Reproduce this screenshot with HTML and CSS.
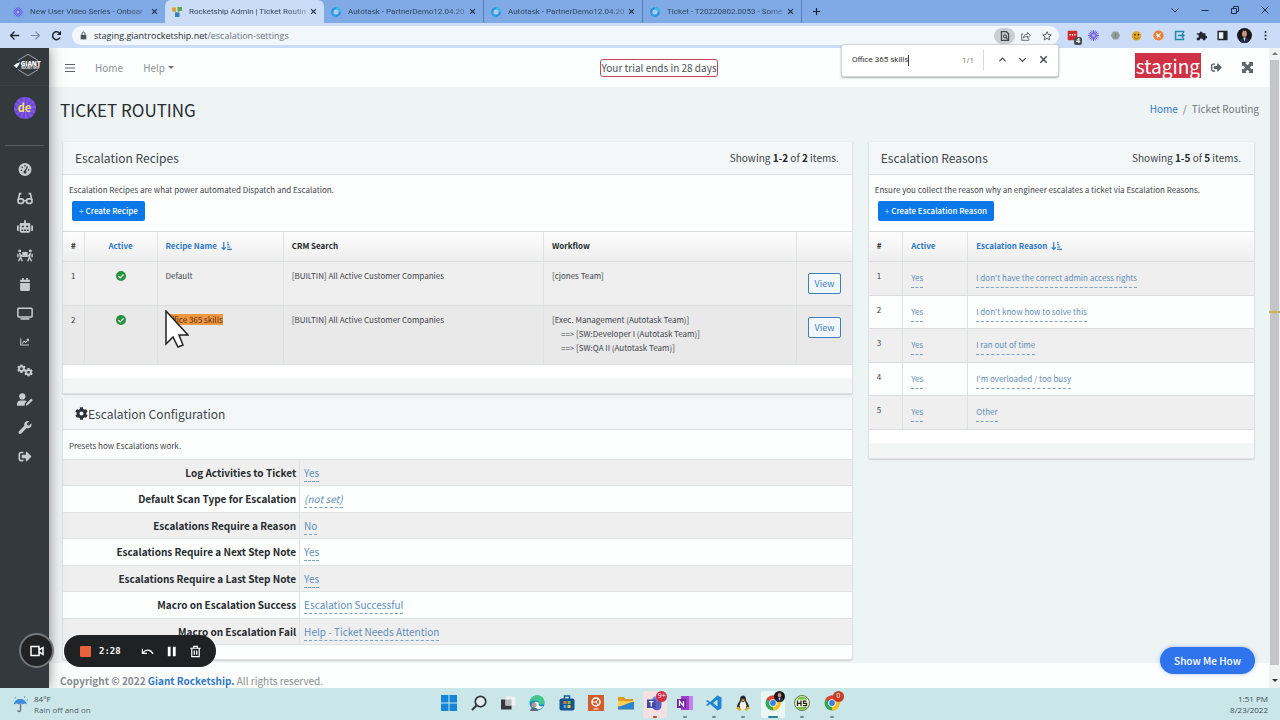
FILE: index.html
```html
<!DOCTYPE html>
<html lang="en">
<head>
<meta charset="utf-8">
<title>Rocketship Admin | Ticket Routing</title>
<link rel="stylesheet" href="styles.css">
</head>
<body>
<svg class="defs" aria-hidden="true">
  <symbol id="signout" viewBox="0 0 512 512"><path d="M497 273L329 441c-15 15-41 4.500-41-17v-96H152c-13.300 0-24-10.700-24-24v-96c0-13.300 10.700-24 24-24h136V88c0-21.400 25.900-32 41-17l168 168c9.300 9.400 9.300 24.600 0 34zM192 436v-40c0-6.600-5.400-12-12-12H96c-17.700 0-32-14.300-32-32V160c0-17.700 14.300-32 32-32h84c6.600 0 12-5.400 12-12V76c0-6.600-5.400-12-12-12H96c-53 0-96 43-96 96v192c0 53 43 96 96 96h84c6.600 0 12-5.400 12-12z"/></symbol>
  <symbol id="cog" viewBox="0 0 512 512"><path d="M487.4 315.7l-42.6-24.6c4.3-23.2 4.3-47 0-70.2l42.6-24.6c4.900-2.800 7.100-8.600 5.500-14-11.100-35.600-30-67.800-54.700-94.600-3.800-4.100-10-5.100-14.800-2.300L380.8 110c-17.900-15.400-38.500-27.300-60.800-35.100V25.8c0-5.600-3.900-10.500-9.400-11.700-36.700-8.200-74.300-7.800-109.200 0-5.500 1.200-9.400 6.100-9.400 11.700V75c-22.200 7.900-42.800 19.800-60.800 35.100L88.700 85.500c-4.900-2.800-11-1.900-14.800 2.300-24.700 26.700-43.600 58.900-54.700 94.600-1.700 5.400.6 11.200 5.500 14L67.300 221c-4.300 23.200-4.300 47 0 70.200l-42.600 24.600c-4.900 2.800-7.100 8.600-5.500 14 11.100 35.600 30 67.800 54.700 94.600 3.800 4.100 10 5.100 14.800 2.300l42.600-24.600c17.900 15.400 38.500 27.300 60.800 35.100v49.200c0 5.600 3.900 10.500 9.400 11.700 36.700 8.200 74.300 7.800 109.200 0 5.500-1.200 9.400-6.100 9.400-11.700v-49.200c22.200-7.900 42.800-19.800 60.800-35.100l42.600 24.600c4.900 2.800 11 1.900 14.800-2.300 24.700-26.700 43.600-58.900 54.700-94.600 1.500-5.500-.7-11.300-5.600-14.100zM256 336c-44.100 0-80-35.900-80-80s35.900-80 80-80 80 35.900 80 80-35.900 80-80 80z"/></symbol>
  <symbol id="check" viewBox="0 0 16 16"><circle cx="8" cy="8" r="8" fill="#28913f"/><path d="M4 8.200l2.800 2.800L12 5.600" fill="none" stroke="#fff" stroke-width="2"/></symbol>
  <symbol id="sort" viewBox="0 0 16 14"><path d="M4 1v11M1 9l3 3 3-3M9 2h2M9 5h3M9 8.500h4.500M9 12h7" fill="none" stroke="currentColor" stroke-width="1.700"/></symbol>
  <symbol id="x" viewBox="0 0 10 10"><path d="M1.500 1.500l7 7M8.500 1.500l-7 7" fill="none" stroke="currentColor" stroke-width="1.600"/></symbol>
  <symbol id="burst" viewBox="0 0 20 20"><g stroke="#6a5be2" stroke-width="1.800"><path d="M10 0v20M0 10h20M3 3l14 14M17 3L3 17M6.200 1l7.600 18M13.800 1L6.200 19M1 6.200l18 7.600M1 13.800l18-7.600"/></g><circle cx="10" cy="10" r="3" fill="#a9b4f4"/></symbol>
  <symbol id="ring" viewBox="0 0 20 20"><circle cx="10" cy="10" r="7.500" fill="none" stroke="#2b8fdc" stroke-width="4.500"/><path d="M10 2.500a7.500 7.500 0 0 1 7.500 7.500" fill="none" stroke="#35c0ec" stroke-width="4.500"/><path d="M2.500 10a7.500 7.500 0 0 0 7.500 7.500" fill="none" stroke="#2ba4e4" stroke-width="4.500"/><circle cx="10" cy="10" r="5" fill="#a9cdf2"/></symbol>
  <symbol id="chrome" viewBox="0 0 32 32"><circle cx="16" cy="16" r="15" fill="#34a853"/><path d="M16 16L29 8.500A15 15 0 0 1 16 31z" fill="#fbc116"/><path d="M16 16L3 8.500A15 15 0 0 1 29 8.500z" fill="#e24335"/><circle cx="16" cy="16" r="7.500" fill="#fff"/><circle cx="16" cy="16" r="5.800" fill="#3c7de8"/></symbol>
  <symbol id="face" viewBox="0 0 20 20"><circle cx="10" cy="10" r="10" fill="#17181d"/><ellipse cx="10" cy="7.500" rx="3.300" ry="4.300" fill="#c9927c"/><path d="M6.500 6c0-5 7-5 7 0l-1.500-2H8z" fill="#443029"/><path d="M4 18c0-5 3-5.500 6-5.500s6 .5 6 5.500a10 10 0 0 1-12 0z" fill="#232f4b"/><path d="M8.500 12.500h3L10 18z" fill="#d9dfe7"/></symbol>
</svg>

<header class="browser">
  <div class="tabstrip">
    <div class="tab"><svg class="fav"><use href="#burst"/></svg><span class="tab-title">New User Video Series - Onboar</span><button class="tab-x" aria-label="Close tab"><svg><use href="#x"/></svg></button></div>
    <div class="tab active"><svg class="fav" viewBox="0 0 20 20"><path d="M0 1h8v8H0z" fill="#e79a35"/><path d="M11 0h9v8h-9z" fill="#67a63b"/><path d="M6 11h9v9H6z" fill="#377ec2"/><path d="M5 8l5 4 5-4" fill="none" stroke="#7b9c61" stroke-width="2"/></svg><span class="tab-title">Rocketship Admin | Ticket Routin</span><button class="tab-x" aria-label="Close tab"><svg><use href="#x"/></svg></button></div>
    <div class="tab"><svg class="fav"><use href="#ring"/></svg><span class="tab-title">Autotask - PartnerDemo12.04.20</span><button class="tab-x" aria-label="Close tab"><svg><use href="#x"/></svg></button></div>
    <div class="tab line"><svg class="fav"><use href="#ring"/></svg><span class="tab-title">Autotask - PartnerDemo12.04.20</span><button class="tab-x" aria-label="Close tab"><svg><use href="#x"/></svg></button></div>
    <div class="tab line end"><svg class="fav"><use href="#ring"/></svg><span class="tab-title">Ticket - T20220802.0053 - Some</span><button class="tab-x" aria-label="Close tab"><svg><use href="#x"/></svg></button></div>
    <button class="newtab" aria-label="New tab"><svg viewBox="0 0 10 10"><path d="M5 1v8M1 5h8" stroke="currentColor" stroke-width="1.300"/></svg></button>
    <div class="winctl">
      <button aria-label="Search tabs"><svg viewBox="0 0 10 10"><path d="M1.500 3.500L5 7l3.500-3.500" fill="none" stroke="currentColor"/></svg></button>
      <button aria-label="Minimize"><svg viewBox="0 0 10 10"><path d="M1.500 5.500h7" stroke="currentColor"/></svg></button>
      <button aria-label="Restore"><svg viewBox="0 0 10 10"><path d="M1.500 3.500h5v5h-5zM3.500 3.500v-2h5v5h-2" fill="none" stroke="currentColor"/></svg></button>
      <button aria-label="Close"><svg viewBox="0 0 10 10"><path d="M1.500 1.500l7 7M8.500 1.500l-7 7" stroke="currentColor"/></svg></button>
    </div>
  </div>
  <div class="toolbar">
    <button aria-label="Back"><svg viewBox="0 0 14 14"><path d="M13 7H2M7 2L2 7l5 5" fill="none" stroke="currentColor" stroke-width="1.700"/></svg></button>
    <button class="dim" aria-label="Forward"><svg viewBox="0 0 14 14"><path d="M1 7h11M7 2l5 5-5 5" fill="none" stroke="currentColor" stroke-width="1.500"/></svg></button>
    <button aria-label="Reload"><svg viewBox="0 0 14 14"><path d="M11.500 9.500A5 5 0 1 1 11 4.200" fill="none" stroke="currentColor" stroke-width="1.900"/><path d="M12.800 1v5.500H7.500z" fill="currentColor"/></svg></button>
    <div class="omnibox">
      <svg class="lock" viewBox="0 0 10 12"><path d="M1 5h8v6.500H1z" fill="#4c5357"/><path d="M3 5V3a2 2 0 0 1 4 0v2" fill="none" stroke="#4c5357" stroke-width="1.400"/></svg>
      <p class="url"><span>staging.giantrocketship.net</span>/escalation-settings</p>
      <button class="pill" aria-label="Find"><svg viewBox="0 0 12 14"><path d="M1 1h7l3 3v9H1z" fill="none" stroke="currentColor" stroke-width="1.700"/><circle cx="6" cy="7.500" r="2.200" fill="none" stroke="currentColor" stroke-width="1.500"/><path d="M7.500 9l3 3.500" stroke="currentColor" stroke-width="1.500"/></svg></button>
      <button aria-label="Share"><svg viewBox="0 0 14 14"><path d="M3 4H1v9h10v-3M3.500 10c0-4 2.500-5.500 5.500-5.500V2l4 4-4 4V7.500c-2.500 0-4 .5-5.500 2.500z" fill="none" stroke="currentColor" stroke-width="1.100"/></svg></button>
      <button aria-label="Bookmark"><svg viewBox="0 0 14 14"><path d="M7 1l1.800 4 4.200.4-3.200 2.800 1 4.300L7 10.200l-3.800 2.300 1-4.300L1 5.400 5.200 5z" fill="none" stroke="currentColor" stroke-width="1.200"/></svg></button>
    </div>
    <div class="exts">
      <button class="ext lp" aria-label="Passwords"><svg viewBox="0 0 16 16"><rect width="14" height="14" x="1" y="1" rx="1.500" fill="#cc2a2c"/><circle cx="4.500" cy="7" r="1.200" fill="#fff"/><circle cx="8" cy="7" r="1.200" fill="#fff"/><circle cx="11.500" cy="7" r="1.200" fill="#fff"/></svg><span>4</span></button>
      <button class="ext" aria-label="Loom"><svg><use href="#burst"/></svg></button>
      <button class="ext" aria-label="Extension"><svg viewBox="0 0 14 14"><path d="M4 2h6l3 5-3 5H4L1 7z" fill="#95a19c"/><path d="M4 6h6M4 9h6M7 3v8" stroke="#7c8784"/></svg></button>
      <button class="ext" aria-label="Cookies"><svg viewBox="0 0 14 14"><circle cx="7" cy="7.500" r="6" fill="#e2a62b"/><circle cx="5" cy="6" r="1.100" fill="#47351c"/><circle cx="9.500" cy="6" r="1.100" fill="#47351c"/><path d="M4 9.500c2 2 4 2 6 0" stroke="#8a4b15" fill="none"/></svg></button>
      <button class="ext" aria-label="Extension"><svg viewBox="0 0 14 14"><circle cx="7" cy="7" r="6.500" fill="#ee7a2f"/><path d="M4 4l6 6M10 4L7 7l-2 3M4 7h2" fill="none" stroke="#fff" stroke-width="1.300"/></svg></button>
      <button class="ext" aria-label="Extension"><svg viewBox="0 0 14 14"><path d="M12 4V2H2v10h10v-2M5 7h8M10 4.500L12.500 7 10 9.500" fill="none" stroke="#2b87ae" stroke-width="2"/></svg></button>
      <button class="ext" aria-label="Extensions"><svg viewBox="0 0 14 14"><path d="M1 4h3.500a2 2 0 1 1 4 0H12v3.300a1.800 1.800 0 1 1 0 3.500V13H8.600a1.900 1.900 0 1 0-3.700 0H1V9.600A1.900 1.900 0 1 0 1 6z" fill="#23282c"/></svg></button>
      <button class="ext" aria-label="Side panel"><svg viewBox="0 0 14 14"><path d="M1.500 2h11v10h-11z" fill="#eef3fb" stroke="#1f2529" stroke-width="1.800"/><path d="M8 2h4.500v10H8z" fill="#1f2529"/></svg></button>
      <button class="ext avatar" aria-label="Profile"><svg><use href="#face"/></svg></button>
      <button class="ext" aria-label="Menu"><svg viewBox="0 0 14 14"><circle cx="7" cy="2.500" r="1.300"/><circle cx="7" cy="7" r="1.300"/><circle cx="7" cy="11.500" r="1.300"/></svg></button>
    </div>
  </div>
  <form class="find">
    <input aria-label="Find in page" value="Office 365 skills"><i class="caret"></i>
    <span class="count">1/1</span>
    <button type="button" aria-label="Previous"><svg viewBox="0 0 10 10"><path d="M1.500 7L5 3.500 8.500 7" fill="none" stroke="currentColor" stroke-width="1.300"/></svg></button>
    <button type="button" aria-label="Next"><svg viewBox="0 0 10 10"><path d="M1.500 3.500L5 7l3.500-3.500" fill="none" stroke="currentColor" stroke-width="1.300"/></svg></button>
    <button type="button" aria-label="Close find bar"><svg><use href="#x"/></svg></button>
  </form>
</header>

<div class="viewport">
  <aside class="sidebar">
    <a class="brand" href="#" aria-label="Giant Rocketship"><svg viewBox="0 0 84 66"><path d="M14 20L42 3l28 17M14 46l28 17 28-17" fill="none" stroke="#c9cfd1" stroke-width="2"/><path d="M1 36l9-7 10-4-4 9-7 8-2-4z" fill="#fff"/><text x="22" y="35" class="logo-a">GIANT</text><text x="23" y="45" class="logo-b">ROCKET SHIP</text></svg></a>
    <a class="user" href="#">de</a>
    <nav class="side-nav" aria-label="Main">
      <a href="#" aria-label="Dashboard"><svg viewBox="0 0 16 16"><circle cx="8" cy="8" r="8"/><path d="M7.500 11L11 4.500" stroke="#33393d" stroke-width="1.500"/><g fill="#33393d"><circle cx="8" cy="11" r="1.900"/><circle cx="3.500" cy="9" r="1"/><circle cx="4.500" cy="5.200" r="1"/><circle cx="8" cy="3.500" r="1"/><circle cx="12.500" cy="8.500" r="1"/></g></svg></a>
      <a href="#" aria-label="Review"><svg viewBox="0 0 18 14"><path d="M5 1.500H3L1.200 9M13 1.500h2L16.800 9M7.500 9.500h3" fill="none" stroke="currentColor" stroke-width="1.800"/><rect x="1.200" y="7.500" width="6" height="5" rx="2" fill="none" stroke="currentColor" stroke-width="1.900"/><rect x="10.800" y="7.500" width="6" height="5" rx="2" fill="none" stroke="currentColor" stroke-width="1.900"/></svg></a>
      <a href="#" aria-label="Automation"><svg viewBox="0 0 18 14"><path d="M8 0h2v3h3.500a1.500 1.500 0 0 1 1.500 1.500V12a2 2 0 0 1-2 2H5a2 2 0 0 1-2-2V4.500A1.500 1.500 0 0 1 4.500 3H8zM0 6h2v6H1a1 1 0 0 1-1-1zM16 6h2v5a1 1 0 0 1-1 1h-1z"/><g fill="#33393d"><circle cx="6.500" cy="7" r="1.200"/><circle cx="11.500" cy="7" r="1.200"/><path d="M5 10.500h2V12H5zM8 10.500h2V12H8zM11 10.500h2V12h-2z"/></g></svg></a>
      <a href="#" aria-label="Teams"><svg viewBox="0 0 18 14"><circle cx="3" cy="1.800" r="1.600"/><circle cx="15" cy="1.800" r="1.600"/><path d="M6 3h6v4.500H6z"/><path d="M3 4l1 5-2.500 4.500M4 9l2 4.500M15 4l-1 5 2.500 4.500M14 9l-2 4.500M3 5l3 3h6l3-3M1 5v4M17 5v4" fill="none" stroke="currentColor" stroke-width="1.600"/></svg></a>
      <a href="#" aria-label="Calendar"><svg viewBox="0 0 14 16"><path d="M1 2h2.500V0h2v2h3V0h2v2H13v3H1zM1 6h12v8.500a1.500 1.500 0 0 1-1.500 1.500h-9A1.500 1.500 0 0 1 1 14.500z"/></svg></a>
      <a href="#" aria-label="Screens"><svg viewBox="0 0 18 14"><rect x="1" y="1" width="16" height="10" rx="1" fill="none" stroke="currentColor" stroke-width="1.700"/><path d="M4 12.200h10V14H4z"/></svg></a>
      <a href="#" aria-label="Reports"><svg class="small" viewBox="0 0 12 10"><path d="M1 0v9h11M3 7l2.500-3 2 1.500L11 2M9 1.500h2.200V4" fill="none" stroke="currentColor" stroke-width="1.400"/></svg></a>
      <a href="#" aria-label="Settings"><svg viewBox="0 0 18 14"><use href="#cog" x="0" y="0" width="10" height="10"/><use href="#cog" x="8" y="4" width="10" height="10"/></svg></a>
      <a href="#" aria-label="Users"><svg viewBox="0 0 18 14"><circle cx="6" cy="3.500" r="3.500"/><path d="M0 14v-2c0-3 2-4 4-4h4c1.500 0 2.300.4 3 1l-2 2-.5 3zM10 14l.5-2.500L16 6l1.800 1.800-5.500 5.500z"/></svg></a>
      <a href="#" aria-label="Tools"><svg viewBox="0 0 512 512"><path d="M507.730 109.100c-2.240-9.030-13.540-12.090-20.120-5.510l-74.360 74.360-67.880-11.310-11.310-67.880 74.360-74.360c6.620-6.620 3.430-17.900-5.660-20.160-47.380-11.740-99.550.91-136.580 37.930-39.640 39.640-50.550 97.100-34.050 147.200L18.740 402.760c-24.990 24.990-24.990 65.510 0 90.500 24.990 24.990 65.510 24.990 90.500 0l213.210-213.210c50.120 16.710 107.470 5.680 147.370-34.220 37.070-37.070 49.700-89.320 37.910-136.730z"/></svg></a>
      <a href="#" aria-label="Sign out"><svg><use href="#signout"/></svg></a>
    </nav>
  </aside>

  <div class="page">
    <div class="navbar">
      <div class="nav-left">
        <button aria-label="Toggle menu"><svg viewBox="0 0 10 10"><path d="M0 1.500h10M0 5h10M0 8.500h10" stroke="currentColor" stroke-width="1.100"/></svg></button>
        <a href="#">Home</a>
        <a class="help" href="#">Help</a>
      </div>
      <a class="trial" href="#">Your trial ends in 28 days</a>
      <div class="nav-right">
        <span class="staging">staging</span>
        <button aria-label="Sign out"><svg><use href="#signout"/></svg></button>
        <button aria-label="Full screen"><svg viewBox="0 0 12 12"><path d="M0 0h5L3.700 1.300 6 3.600l2.300-2.300L7 0h5v5l-1.300-1.300L8.400 6l2.300 2.300L12 7v5H7l1.300-1.300L6 8.400l-2.300 2.300L5 12H0V7l1.300 1.300L3.600 6 1.300 3.700 0 5z"/></svg></button>
      </div>
    </div>

    <main class="content">
      <div class="title-row">
        <h1>TICKET ROUTING</h1>
        <nav class="crumbs" aria-label="Breadcrumb"><a href="#">Home</a><span>/</span><span>Ticket Routing</span></nav>
      </div>
      <div class="columns">
        <div class="stack">
          <section class="card">
            <header class="card-head"><h2>Escalation Recipes</h2><p>Showing <b>1-2</b> of <b>2</b> items.</p></header>
            <div class="intro"><p>Escalation Recipes are what power automated Dispatch and Escalation.</p><button class="create"><span>+</span> Create Recipe</button></div>
            <table class="grid recipes">
              <colgroup><col class="c-num"><col class="c-active"><col class="c-name"><col class="c-crm"><col><col class="c-view"></colgroup>
              <thead><tr><th class="mid">#</th><th class="mid"><a href="#">Active</a></th><th><a href="#">Recipe Name <svg class="sort"><use href="#sort"/></svg></a></th><th>CRM Search</th><th>Workflow</th><th></th></tr></thead>
              <tbody>
                <tr><td class="mid">1</td><td class="mid"><svg class="check"><use href="#check"/></svg></td><td>Default</td><td>[BUILTIN] All Active Customer Companies</td><td>[cjones Team]</td><td class="mid act"><button class="view">View</button></td></tr>
                <tr><td class="mid">2</td><td class="mid"><svg class="check"><use href="#check"/></svg></td><td class="hit"><mark>Office 365 skills</mark><svg class="cursor" viewBox="0 0 24 38"><path d="M1 1v33l7-7 5 10 5-2-4-10h9z" fill="#fff" stroke="#222" stroke-width="1.500"/></svg></td><td>[BUILTIN] All Active Customer Companies</td><td>[Exec. Management (Autotask Team)]<div class="step">==&gt; [SW:Developer I (Autotask Team)]</div><div class="step">==&gt; [SW:QA II (Autotask Team)]</div></td><td class="mid act"><button class="view">View</button></td></tr>
              </tbody>
            </table>
            <div class="card-foot"></div>
          </section>

          <section class="card">
            <header class="card-head tall"><h2><svg class="gear"><use href="#cog"/></svg>Escalation Configuration</h2></header>
            <p class="note">Presets how Escalations work.</p>
            <table class="config">
              <tr><th scope="row">Log Activities to Ticket</th><td><a href="#">Yes</a></td></tr>
              <tr><th scope="row">Default Scan Type for Escalation</th><td><a class="unset" href="#">(not set)</a></td></tr>
              <tr><th scope="row">Escalations Require a Reason</th><td><a href="#">No</a></td></tr>
              <tr><th scope="row">Escalations Require a Next Step Note</th><td><a href="#">Yes</a></td></tr>
              <tr><th scope="row">Escalations Require a Last Step Note</th><td><a href="#">Yes</a></td></tr>
              <tr><th scope="row">Macro on Escalation Success</th><td><a href="#">Escalation Successful</a></td></tr>
              <tr><th scope="row">Macro on Escalation Fail</th><td><a href="#">Help - Ticket Needs Attention</a></td></tr>
            </table>
            <div class="pad"></div>
          </section>
        </div>

        <section class="card">
          <header class="card-head"><h2>Escalation Reasons</h2><p>Showing <b>1-5</b> of <b>5</b> items.</p></header>
          <div class="intro"><p>Ensure you collect the reason why an engineer escalates a ticket via Escalation Reasons.</p><button class="create"><span>+</span> Create Escalation Reason</button></div>
          <table class="grid reasons">
            <colgroup><col class="r-num"><col class="r-active"><col></colgroup>
            <thead><tr><th>#</th><th><a href="#">Active</a></th><th><a href="#">Escalation Reason <svg class="sort"><use href="#sort"/></svg></a></th></tr></thead>
            <tbody>
              <tr><td>1</td><td><a href="#">Yes</a></td><td><a href="#">I don't have the correct admin access rights</a></td></tr>
              <tr><td>2</td><td><a href="#">Yes</a></td><td><a href="#">I don't know how to solve this</a></td></tr>
              <tr><td>3</td><td><a href="#">Yes</a></td><td><a href="#">I ran out of time</a></td></tr>
              <tr><td>4</td><td><a href="#">Yes</a></td><td><a href="#">I'm overloaded / too busy</a></td></tr>
              <tr><td>5</td><td><a href="#">Yes</a></td><td><a href="#">Other</a></td></tr>
            </tbody>
          </table>
          <div class="card-foot"></div>
        </section>
      </div>
    </main>
    <footer class="footer"><b>Copyright © 2022 <a href="#">Giant Rocketship.</a></b> All rights reserved.</footer>
  </div>

  <div class="scroll" aria-hidden="true"><i class="up"></i><div class="thumb"></div><i class="down"></i><i class="tick"></i></div>
  <button class="showme">Show Me How</button>
  <button class="cam" aria-label="Camera"><svg viewBox="0 0 14 12"><path d="M1 1.500h8v9H1zM9 5l4-2.500v7L9 7z" fill="none" stroke="#fff" stroke-width="1.500"/></svg></button>
  <div class="recorder">
    <button class="stop" aria-label="Stop"></button><time>2:28</time>
    <button aria-label="Restart"><svg viewBox="0 0 14 14"><path d="M1.500 4v5h5M2 8.500C5 4.500 10 4.500 13 9.500" fill="none" stroke="#fff" stroke-width="1.300"/></svg></button>
    <button aria-label="Pause"><svg viewBox="0 0 14 14"><path d="M3 2h3v10H3zM8.500 2h3v10h-3z" fill="#fff"/></svg></button>
    <button aria-label="Delete"><svg viewBox="0 0 14 14"><path d="M1.500 3.500h11M5 3V1.500h4V3M3 4v8.500h8V4M5.700 6v4.500M8.300 6v4.500" fill="none" stroke="#fff" stroke-width="1.300"/></svg></button>
  </div>
</div>

<footer class="taskbar">
  <div class="weather">
    <svg viewBox="0 0 16 18"><path d="M1 9c0-8 13-8 14 0-2-1.500-3-1.500-4.500 0-1.500-1.500-3-1.500-4.500 0C4.500 7.500 3 7.500 1 9z" fill="#3b8bd8"/><path d="M8 8v7c0 2-3 2-3 0" fill="none" stroke="#6d777d" stroke-width="1.500"/><path d="M2 3l1-2M12 2l1-2M15 5l1-2" stroke="#4f9de4"/></svg>
    <p>84°F<br><span>Rain off and on</span></p>
  </div>
  <div class="apps">
    <button aria-label="Start"><svg viewBox="0 0 32 32"><path d="M0 0h15v15H0zM17 0h15v15H17zM0 17h15v15H0zM17 17h15v15H17z" fill="#1483d8"/></svg></button>
    <button aria-label="Search"><svg viewBox="0 0 32 32"><circle cx="19" cy="13" r="10.500" fill="#e4eef1" stroke="#31383d" stroke-width="3.500"/><path d="M11.500 20.500L2 30" stroke="#31383d" stroke-width="4"/></svg></button>
    <button aria-label="Task view"><svg viewBox="0 0 32 32"><path d="M2 9h21v20H2z" fill="#34383c"/><path d="M11 3h20v18H11z" fill="#eef0f1"/><path d="M11 9h12v12H11z" fill="#b9bdc0"/></svg></button>
    <button aria-label="Edge"><svg viewBox="0 0 32 32"><circle cx="16" cy="16" r="15" fill="#1c83cf"/><path d="M1 15C2-4 31-4 31 14c0 6-8 7-11 4 2-6-9-11-19-3z" fill="#43c78a"/><path d="M10 17c3-7 12-1 9 2 1 4 6 5 10 3-6 10-19 9-19-5z" fill="#eaf5f8"/><circle cx="10" cy="20" r="5" fill="#bb9b8e"/><path d="M2 32c0-9 16-9 16 0z" fill="#5c6b76"/></svg></button>
    <button aria-label="Store"><svg viewBox="0 0 32 32"><path d="M11 8V2h10v6" fill="none" stroke="#1d5c93" stroke-width="3"/><rect x="1" y="7" width="30" height="24" rx="4" fill="#15558e"/><path d="M9 12h6v6H9z" fill="#ef6f43"/><path d="M17 12h6v6h-6z" fill="#82bd42"/><path d="M9 20h6v6H9z" fill="#42a5e4"/><path d="M17 20h6v6h-6z" fill="#f1c638"/></svg></button>
    <button aria-label="Ubuntu"><svg viewBox="0 0 32 32"><path d="M0 0h32v32H0z" fill="#d35b2d"/><circle cx="16" cy="14" r="8" fill="none" stroke="#fff" stroke-width="3"/><path d="M16 14h-8M16 14l5-7M16 14l5 7M11 28h10" stroke="#fff" stroke-width="2"/></svg></button>
    <button aria-label="Files"><svg viewBox="0 0 32 32"><path d="M0 4h12l3 4h15v20H0z" fill="#dd9b1e"/><path d="M0 12h32v17H0z" fill="#f8ce52"/><path d="M0 23c11 0 20-9 32-9v15H0z" fill="#2f83cf"/></svg></button>
    <button class="alert" aria-label="Teams"><svg viewBox="0 0 32 32"><circle cx="16" cy="8" r="5" fill="#7480da"/><path d="M9 11h20v10c0 12-16 12-18 4z" fill="#5a63c4"/><path d="M0 9h17v17H0z" fill="#3f49a9"/><path d="M4 13h9M8.500 13v10" stroke="#fff" stroke-width="2.500"/></svg><span class="badge">9+</span></button>
    <button class="open" aria-label="OneNote"><svg viewBox="0 0 32 32"><path d="M8 2h23v28H8z" fill="#9b3fc8"/><path d="M24 2h7v28h-7z" fill="#c781e8"/><path d="M0 8h18v18H0z" fill="#7425a5"/><path d="M5 22V12l8 10V12" fill="none" stroke="#fff" stroke-width="2.500"/></svg></button>
    <button class="open" aria-label="Code"><svg viewBox="0 0 32 32"><path d="M23 1l8 4v22l-8 4L8 18l-5 4-3-2 5-4-5-4 3-2 5 4zM23 9l-9 7 9 7z" fill="#1f86d1" fill-rule="evenodd"/></svg></button>
    <button class="open" aria-label="Linux"><svg viewBox="0 0 32 32"><path d="M10 9C10-2 22-2 22 9c0 5 7 8 6 19H4C3 17 10 14 10 9z" fill="#26282a"/><path d="M12 12c2 3 6 3 8 0l3 9-2 8H11l-2-8z" fill="#f2f2ea"/><path d="M12 10l4-2 4 2-4 3zM2 26l5-3 6 6-4 3zM30 26l-5-3-6 6 4 3z" fill="#e5aa28"/></svg></button>
    <button class="open current" aria-label="Chrome"><svg><use href="#chrome"/></svg><svg class="mini"><use href="#face"/></svg></button>
    <button class="open" aria-label="HeidiSQL"><svg viewBox="0 0 32 32"><circle cx="16" cy="16" r="15" fill="#e8f5d8" stroke="#5c743c" stroke-width="2"/><path d="M5 9a14 14 0 0 1 22 0zM5 24a14 14 0 0 0 22 0z" fill="#74be39"/><path d="M7 11v11M7 16.500h7M14 11v11M25 12h-6v4.500h6V21h-7" fill="none" stroke="#222" stroke-width="2.500"/></svg></button>
    <button class="open" aria-label="Chrome work"><svg><use href="#chrome"/></svg><span class="badge work">0</span></button>
  </div>
  <p class="clock">1:51 PM<br>8/23/2022</p>
</footer>
</body>
</html>
```
FILE: styles.css
```css
* { box-sizing: border-box; }
html, body { height: 100%; }
body {
  margin: 0;
  display: flex;
  flex-direction: column;
  overflow: hidden;
  color: #3d4449;
  font-family: "Noto Sans CJK SC", "Noto Sans", sans-serif;
  font-size: 8px;
  line-height: 14px;
}
h1, h2, p { margin: 0; font-weight: 400; }
a { color: #2f78c9; text-decoration: none; }
button {
  margin: 0; padding: 0; border: 0; background: none;
  font: inherit; color: inherit;
  display: inline-flex; align-items: center; justify-content: center;
}
svg { display: block; flex: none; fill: currentColor; }
.defs { position: absolute; width: 0; height: 0; }

/* Browser frame */
.browser, .taskbar { font-family: "Open Sans", sans-serif; }
.browser { position: relative; z-index: 5; flex: none; color: #23303f; }
.tabstrip { display: flex; align-items: stretch; height: 23px; padding-left: 6px; background: #7faae5; }
.tab { display: flex; align-items: center; width: 159px; padding: 0 4px 0 7px; color: #33465f; }
.tab.active { background: #cbdcf7; border-radius: 6px 6px 0 0; }
.tab.line { border-left: 1px solid #547fbb; }
.tab.end { width: 160px; border-right: 1px solid #547fbb; }
.fav { width: 10px; height: 10px; margin-right: 7px; }
.tab-title {
  flex: 1; min-width: 0; white-space: nowrap; font-family: Roboto, sans-serif; font-size: 8px;
  -webkit-mask-image: linear-gradient(90deg, #000 85%, #0006);
  mask-image: linear-gradient(90deg, #000 85%, #0006);
}
.tab-x { width: 14px; color: #1e2f46; }
.tab-x svg { width: 7px; height: 7px; }
.newtab { width: 28px; color: #122238; }
.newtab svg { width: 9px; height: 9px; }
.winctl { display: flex; margin-left: auto; color: #1c2f4b; }
.winctl button { width: 30px; padding-bottom: 4px; }
.winctl svg { width: 10px; height: 10px; }
.toolbar { display: flex; align-items: center; height: 25px; padding: 0 4px; background: #cbdcf7; }
.toolbar > button { width: 21px; color: #20282f; }
.toolbar > button svg { width: 11px; height: 11px; }
.toolbar > .dim { color: #7e8c9f; }
.omnibox {
  flex: 1; display: flex; align-items: center; height: 19px; margin: 0 3px 0 5px;
  padding: 0 2px 0 8px; border-radius: 10px; background: #f1f7fb; color: #3f474c;
}
.lock { width: 7px; height: 9px; margin-right: 7px; }
.url { flex: 1; font-size: 9px; color: #66727b; }
.url span { color: #262d32; }
.omnibox button { width: 21px; height: 16px; }
.omnibox button svg { width: 10px; height: 10px; }
.omnibox .pill { border-radius: 8px; background: #c9d0d4; }
.exts { display: flex; justify-content: space-between; width: 214px; }
.ext { width: 21px; height: 20px; position: relative; }
.ext svg { width: 11px; height: 11px; }
.lp span {
  position: absolute; right: 1px; bottom: 1px; width: 8px; height: 8px; border-radius: 2px;
  background: #494d50; color: #fff; font-size: 7px; line-height: 8px; font-weight: 700;
}
.avatar svg { width: 15px; height: 15px; }
.find {
  position: absolute; top: 44px; right: 221px; width: 218px; height: 33px;
  display: flex; align-items: center; padding: 0 4px 2px 10px;
  background: #fff; border: 1px solid #cfd5d9; border-radius: 3px; box-shadow: 0 1px 2px #0005;
}
.find input { width: 106px; padding: 0; border: 0; outline: 0; background: none; font: 8px Roboto, sans-serif; color: #333; }
.caret { position: absolute; left: 66px; top: 10px; width: 1px; height: 11px; background: #444; }
.count { flex: 1; padding-left: 4px; font-size: 8px; color: #777; }
.find button { width: 21px; height: 20px; color: #434a4f; }
.find .count + button { width: 29px; padding-left: 8px; border-left: 1px solid #d5d9dc; }
.find button svg { width: 9px; height: 9px; }

/* Page area */
.viewport { position: relative; flex: 1; min-height: 0; display: flex; overflow: hidden; background: #eef3f4; }
.sidebar {
  flex: none; width: 49px; display: flex; flex-direction: column; align-items: center;
  position: relative; z-index: 2; background: #33393d; color: #c6cdd0;
  box-shadow: 0 0 13px #2228;
}
.brand { width: 100%; height: 38px; display: flex; justify-content: center; padding: 5px 0 0 7px; border-bottom: 1px solid #3c4448; }
.brand svg { width: 30px; height: 24px; }
.logo-a { font: 800 17px "Open Sans", sans-serif; fill: #fff; }
.logo-b { font: 700 8px "Open Sans", sans-serif; fill: #fff; }
.user {
  width: 22px; height: 22px; margin-top: 11px; border-radius: 50%;
  background: repeating-conic-gradient(#6c48d4 0 15deg, #7a58e0 15deg 30deg);
  color: #f4e46a; font-size: 11px; line-height: 21px; font-weight: 700; text-align: center;
}
.side-nav { align-self: stretch; margin: 26px 5px 0; padding-top: 9px; height: 326px; border-top: 1px solid #565e63; display: flex; flex-direction: column; }
.side-nav a { flex: 1; display: flex; align-items: center; justify-content: center; color: #c6cdd0; }
.side-nav svg { width: 16px; height: 13px; }
.side-nav svg.small { width: 9px; height: 8px; }
.page { flex: 1; min-width: 0; display: flex; flex-direction: column; }
.navbar {
  flex: none; height: 40px; display: grid; grid-template-columns: 1fr auto 1fr; align-items: center;
  padding: 0 16px; background: #fdfefe; border-bottom: 1px solid #f0f3f4; font-size: 10px;
}
.nav-left { display: flex; align-items: center; gap: 20px; }
.nav-left a { color: #8b9296; }
.nav-left button, .nav-right button { color: #5c6468; }
.nav-left svg { width: 10px; height: 10px; }
.help::after { content: ""; display: inline-block; margin-left: 3px; vertical-align: 3px; border: 3px solid transparent; border-top-color: #6b7276; border-bottom: 0; }
.trial { border: 1px solid #c4475a; border-radius: 3px; line-height: 16px; color: #4c5358; }
.nav-right { display: flex; align-items: center; justify-content: flex-end; }
.nav-right svg { width: 11px; height: 11px; }
.nav-right button { margin-left: 10px; }
.nav-right button + button { margin-left: 20px; }
.staging { margin-top: -5px; padding: 0 1px; background: #cf3244; color: #fff; font-size: 19px; line-height: 25px; }
.content { flex: 1 0 auto; }
.title-row { display: flex; align-items: center; justify-content: space-between; height: 46px; padding: 0 10px 2px 11px; }
h1 { font-size: 17px; line-height: 24px; color: #262c30; }
.crumbs { display: flex; gap: 5px; padding-bottom: 2px; font-size: 10px; color: #6f777c; }
.columns { display: grid; grid-template-columns: 49fr 24fr; gap: 15px; align-items: start; padding: 7px 14px 0 13px; }
.stack { display: grid; gap: 3px; }
.card { min-width: 0; background: #fdfefe; border: 1px solid #dde3e5; border-top-color: #e8eef0; border-radius: 3px; box-shadow: 0 1px 1px #0002; }
.card-head {
  display: flex; align-items: center; justify-content: space-between; height: 33px; padding: 0 13px 0 12px;
  background: #f3f7f8; border-bottom: 1px solid #d8dfe1; font-size: 10px;
}
.card-head b { color: #22282c; }
h2 { display: flex; align-items: center; font-size: 12px; line-height: 18px; color: #3f464b; }
.gear { width: 13px; height: 13px; color: #2a3035; }
.intro { height: 56px; padding: 8px 6px 0; }
.create { height: 20px; margin: 4px 0 0 3px; padding: 0 7px; gap: 2px; border-radius: 2px; background: #0b78ea; color: #fff; font-weight: 500; }
.create span { color: #9fd0ff; }
table { width: 100%; border-collapse: collapse; table-layout: fixed; }
.grid { border-top: 1px solid #dadddf; border-bottom: 1px solid #d6d9da; }
.grid th, .grid td { padding: 7px 8px 0; text-align: left; vertical-align: top; border-bottom: 1px solid #dadddf; border-left: 1px solid #dfe2e3; }
.grid th:first-child, .grid td:first-child { border-left: 0; }
.grid thead tr { height: 30px; background: linear-gradient(#fdfdfd, #eee); }
.grid th { font-weight: 700; color: #24292d; white-space: nowrap; }
.grid .mid { text-align: center; padding-left: 0; padding-right: 0; }
.sort { display: inline-block; width: 11px; height: 10px; margin-left: 2px; vertical-align: -2px; }
.recipes tbody tr { background: #efefef; height: 44px; }
.recipes tbody tr + tr { background: #e9e9e9; height: 59px; }
.c-num { width: 21px; } .c-active { width: 73px; } .c-name { width: 16%; } .c-crm { width: 33%; } .c-view { width: 55px; }
.check { width: 10px; height: 10px; margin: 2px auto 0; }
.step { padding-left: 9px; }
.recipes .act { padding-top: 11px; }
.view { height: 21px; padding: 0 6px; border: 1px solid #3d7fc0; border-radius: 2px; background: #f2f7fb; color: #3f7fbc; font-size: 9px; }
.hit { position: relative; }
mark { background: #ef9640; color: #5b3210; }
.cursor { position: absolute; left: 7px; top: 4px; width: 24px; height: 38px; }
.card-foot { height: 28px; background: linear-gradient(#fff 45%, #f4f6f6 50%); }
.card-head.tall { height: 32px; }
.note { padding: 9px 6px 6px; }
.config { border-top: 1px solid #dfe2e3; font-size: 10px; }
.config tr { height: 26px; }
.config tr:nth-child(even) { height: 27px; }
.config tr:nth-child(odd), .reasons tbody tr:nth-child(odd) { background: #efefef; }
.config th { width: 30%; padding: 0 3px 0 0; text-align: right; font-weight: 700; color: #262b2f; }
.config td { padding: 0 4px; }
.config th, .config td { border-bottom: 1px solid #dfe2e3; }
.config th { border-right: 1px solid #dfe2e3; }
.config td a { display: inline-block; line-height: 17px; }
.config td a, .reasons td a { border-bottom: 1px dashed #7ca2c8; color: #5f8db9; }
.unset { font-style: italic; }
.pad { height: 14px; }
.r-num { width: 34px; } .r-active { width: 65px; }
.reasons tbody tr { height: 34px; }
.reasons tbody tr:nth-child(even) { height: 33px; }
.reasons td a { display: inline-block; line-height: 18px; }
.footer { flex: none; margin-top: 3px; height: 25px; padding: 11px 11px 0; background: #fdfefe; font-size: 10px; line-height: 14px; color: #858c90; white-space: nowrap; }
.scroll { position: relative; flex: none; width: 11px; display: flex; flex-direction: column; align-items: center; background: #f1f3f3; }
.scroll .thumb { flex: 1; width: 9px; background: #c3c5c6; }
.up, .down { flex: none; border: 3px solid transparent; }
.up { margin: 1px 0 5px; border-bottom-color: #777; }
.down { margin: 14px 0 3px; border-top-color: #333; }
.tick { position: absolute; left: 0; right: 0; top: 263px; height: 2px; background: #c9b45c; }
.showme {
  position: absolute; right: 25px; bottom: 14px; height: 27px; padding: 0 14px; z-index: 3;
  border-radius: 14px; background: #2f74ec; color: #fff; font-size: 10px; font-weight: 500; box-shadow: 0 0 4px #2f74ec66;
}
.cam { position: absolute; z-index: 3; left: 19px; bottom: 20px; width: 35px; height: 35px; border: 2px solid #73787a; border-radius: 50%; background: #202223; }
.cam svg { width: 14px; height: 12px; }
.recorder { position: absolute; z-index: 3; left: 64px; bottom: 21px; width: 152px; height: 32px; padding: 0 14px 0 16px; display: flex; align-items: center; border-radius: 16px; background: #202122; color: #fff; }
.stop { width: 11px; height: 11px; border-radius: 1px; background: #e9623e; }
.recorder time { flex: 1; padding-left: 8px; font: 700 9px "DejaVu Sans Mono", monospace; }
.recorder time ~ button { width: 14px; margin-left: 10px; }
.recorder svg { width: 13px; height: 13px; }

/* Desktop taskbar */
.taskbar { flex: none; height: 32px; display: grid; grid-template-columns: 1fr auto 1fr; align-items: center; padding: 0 12px 0 13px; background: #cbe6e9; color: #3d4c52; font-size: 8px; line-height: 11px; }
.weather { display: flex; align-items: center; gap: 6px; }
.weather svg { width: 15px; height: 17px; }
.weather span { color: #526268; }
.apps { display: flex; justify-content: space-around; width: 412px; }
.apps button { position: relative; width: 24px; height: 27px; padding-bottom: 2px; border-radius: 2px; }
.apps svg { width: 16px; height: 16px; }
.apps .alert { background: #f4dfe1; }
.apps .current { background: #eaf5f6; }
.open::after, .alert::after { content: ""; position: absolute; left: 10px; bottom: 0; width: 4px; height: 2px; border-radius: 1px; background: #78898e; }
.alert::after { background: #c0442e; }
.current::after { left: 7px; width: 10px; background: #2b8390; }
.badge { position: absolute; right: 0; top: 0; width: 11px; height: 11px; border-radius: 50%; background: #cd3047; color: #fff; font-size: 7px; line-height: 10px; text-align: center; }
.badge.work { background: #c53b26; }
.apps .mini { position: absolute; right: 0; top: 0; width: 11px; height: 11px; }
.clock { text-align: right; }
```
